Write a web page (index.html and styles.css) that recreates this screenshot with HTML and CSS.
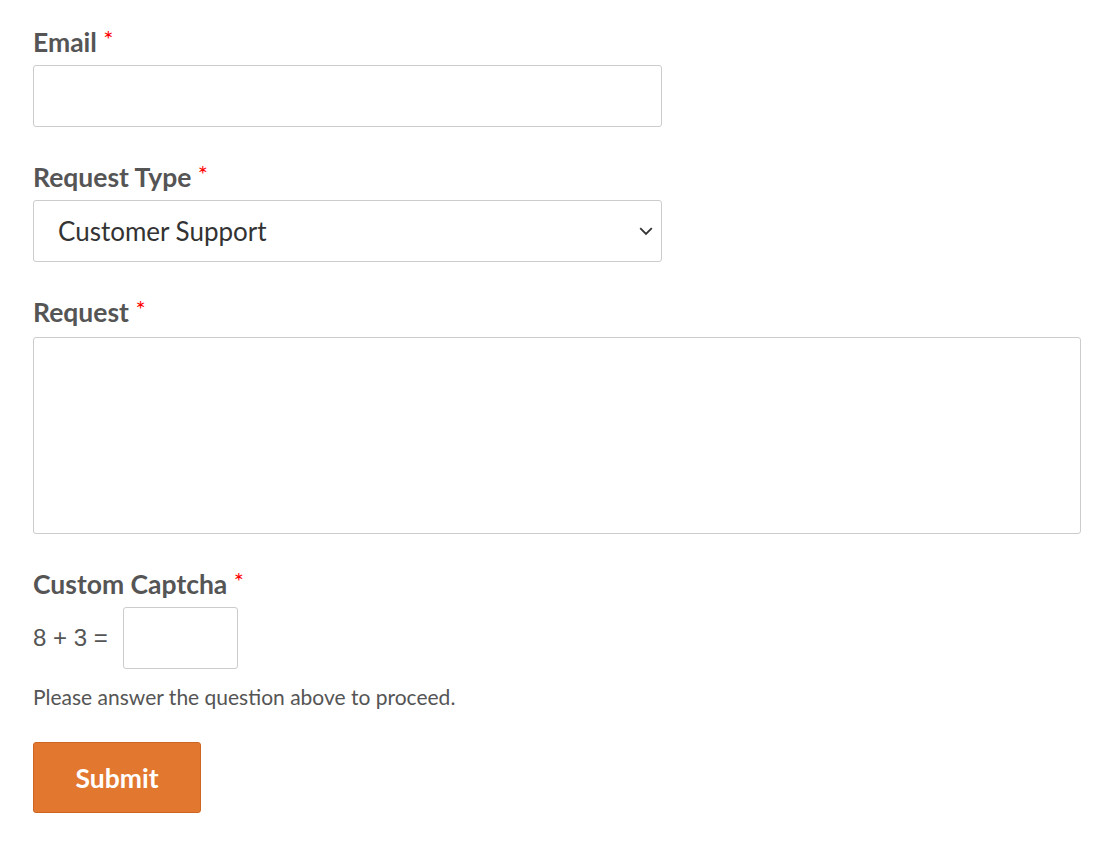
FILE: index.html
```html
<!DOCTYPE html>
<html>
<head>
<meta charset="utf-8">
<link rel="stylesheet" href="styles.css">
</head>
<body>
<form class="form">
  <div class="field">
    <label class="label">Email <span class="req">*</span></label>
    <input class="input input-med" type="email">
  </div>
  <div class="field">
    <label class="label">Request Type <span class="req">*</span></label>
    <div class="select input-med">
      <span class="select-text">Customer Support</span>
      <svg class="chev" width="14" height="9" viewBox="0 0 14 9"><path d="M1.2 1.2 L7 7 L12.8 1.2" fill="none" stroke="#333" stroke-width="1.8"/></svg>
    </div>
  </div>
  <div class="field">
    <label class="label">Request <span class="req">*</span></label>
    <textarea class="textarea"></textarea>
  </div>
  <div class="field">
    <label class="label">Custom Captcha <span class="req">*</span></label>
    <div class="captcha-row">
      <span class="eq">8 + 3 =</span>
      <input class="input input-small" type="text">
    </div>
    <div class="help">Please answer the question above to proceed.</div>
  </div>
  <button class="submit" type="button">Submit</button>
</form>
</body>
</html>
```
FILE: styles.css
```css
html, body {
  margin: 0;
  padding: 0;
  background: #fff;
}
body {
  font-family: Lato, "Open Sans", sans-serif;
  color: #555;
}
.form {
  padding: 27px 0 0 33px;
}
.field {
  margin-bottom: 35px;
}
.label {
  display: block;
  font-size: 26.5px;
  font-weight: 700;
  line-height: 30px;
  color: #555;
  margin-bottom: 8px;
}
.req {
  color: #ff0000;
  font-weight: 400;
  font-size: 24px;
  vertical-align: top;
  position: relative;
  top: -3px;
}
.input, .select, .textarea {
  box-sizing: border-box;
  border: 1px solid #cccccc;
  border-radius: 3px;
  background: #fff;
  display: block;
  margin: 0;
}
.input-med {
  width: 629px;
  height: 62px;
}
.select {
  display: flex;
  align-items: center;
  justify-content: space-between;
  padding: 0 8px 0 24px;
  font-size: 26px;
  color: #333;
}
.select-text {
  color: #333;
}
.textarea {
  width: 1048px;
  height: 197px;
  resize: none;
  margin-top: 10px;
}
.captcha-row {
  display: flex;
  align-items: center;
  margin-top: 0;
}
.eq {
  font-family: "Liberation Sans", Arial, sans-serif;
  font-size: 24px;
  color: #555;
  margin-right: 15px;
  font-weight: 400;
}
.input-small {
  width: 115px;
  height: 62px;
}
.help {
  font-size: 21px;
  line-height: 24px;
  margin-top: 16px;
  color: #555;
}
.submit {
  display: block;
  width: 168px;
  height: 71px;
  background: #e27730;
  border: 1px solid #cd6622;
  border-radius: 3px;
  color: #fff;
  font-family: Lato, sans-serif;
  font-weight: 700;
  font-size: 26.5px;
  margin-top: -2px;
  padding: 0;
}
```
